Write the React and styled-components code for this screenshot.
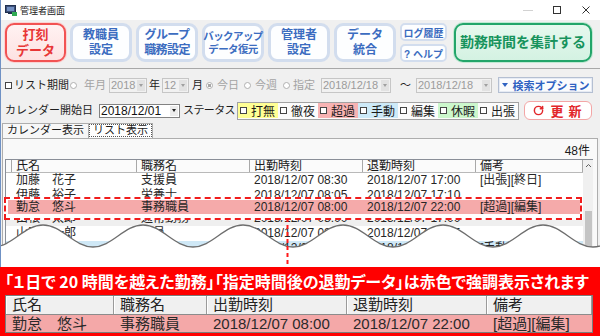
import React from "react";
import styled, { createGlobalStyle, css } from "styled-components";
import { RotateCw } from "lucide-react";

const FONT = `"Liberation Sans", "Noto Sans CJK JP", sans-serif`;

const Global = createGlobalStyle`
  html, body { margin: 0; padding: 0; background: #ffffff; }
  body { width: 600px; height: 336px; overflow: hidden; font-family: ${FONT}; color: #1a1a1a; }
  * { box-sizing: border-box; }
`;

const ml = css`
  margin-left: ${(p) => p.$ml || 0}px;
`;

const Page = styled.div`
  width: 600px;
  height: 336px;
  display: flex;
  flex-direction: column;
`;

const Window = styled.div`
  position: relative;
  height: 267px;
  flex: none;
  overflow: hidden;
  background: #f0f0f0;
  border-left: 1px solid #6f91c4;
  display: flex;
  flex-direction: column;
`;

const TitleBar = styled.div`
  height: 20px;
  flex: none;
  background: #fff;
  display: flex;
  align-items: center;
  padding-left: 4px;
`;

const TitleText = styled.span`
  font-size: 9px;
  margin-left: 3px;
  color: #222;
`;

const WinControls = styled.div`
  margin-left: auto;
  display: flex;
  height: 100%;
`;

const WinCtl = styled.div`
  width: 29px;
  display: flex;
  align-items: center;
  justify-content: center;
`;

const Toolbar = styled.div`
  height: 49px;
  flex: none;
  display: flex;
  align-items: flex-start;
  gap: 4px;
  padding: 3px 0 0 4px;
  border-bottom: 1px solid #a8a8a8;
`;

const variants = {
  red: css`
    border: 2px solid #f25353;
    background: linear-gradient(#fff2f2, #fde2e2);
    color: #e83636;
    font-size: 13px;
    box-shadow: 0 0 0 1px #fbd3d3;
  `,
  blue: css`
    border: 3px solid #d2ddee;
    background: #fdfeff;
    color: #3b6cc0;
    font-size: 12px;
  `,
  green: css`
    border: 2px solid #23a56a;
    background: linear-gradient(#e6f8ee, #d4f2e2);
    color: #17935c;
    font-size: 14px;
    box-shadow: 0 0 0 1px #bfe9d2;
  `,
};

const ToolBtn = styled.div`
  width: ${(p) => p.$w || 62}px;
  height: 39px;
  flex: none;
  ${ml};
  display: flex;
  align-items: center;
  justify-content: center;
  text-align: center;
  border-radius: 9px;
  font-weight: bold;
  line-height: 1.22;
  letter-spacing: ${(p) => (p.$tight ? "-0.6px" : "0")};
  white-space: nowrap;
  ${(p) => variants[p.$v]};
  font-size: ${(p) => (p.$fs ? p.$fs + "px" : undefined)};
`;

const SmallCol = styled.div`
  display: flex;
  flex-direction: column;
  gap: 3px;
  width: 47px;
`;

const SmallBtn = styled.div`
  height: 18px;
  border: 2px solid #d2ddee;
  background: #fdfeff;
  border-radius: 5px;
  color: #3b6cc0;
  font-size: 10px;
  font-weight: bold;
  display: flex;
  align-items: center;
  justify-content: center;
  white-space: nowrap;
`;

const Filters = styled.div`
  flex: none;
  padding-top: 8px;
`;

const FRow = styled.div`
  display: flex;
  align-items: center;
  height: ${(p) => p.$h}px;
  margin-top: ${(p) => p.$mt || 0}px;
`;

const Label = styled.span`
  ${ml};
  font-size: 11px;
  line-height: 1;
  white-space: nowrap;
  color: ${(p) => (p.$dim ? "#a3a3a3" : "#1e1e1e")};
  letter-spacing: ${(p) => p.$ls || 0}px;
`;

const CheckBox = styled.span`
  ${ml};
  width: 7px;
  height: 7px;
  flex: none;
  border: 1px solid #444;
  background: #fff;
`;

const Radio = styled.span`
  ${ml};
  width: 7px;
  height: 7px;
  flex: none;
  border-radius: 50%;
  border: 1px solid #b0b0b0;
  background: ${(p) =>
    p.$checked ? "radial-gradient(circle, #a8a8a8 0 1.6px, #fff 2px)" : "#fff"};
`;

const Combo = styled.div`
  ${ml};
  width: ${(p) => p.$w}px;
  height: ${(p) => p.$h || 15}px;
  flex: none;
  display: flex;
  border: 1px solid ${(p) => (p.$disabled ? "#c6c6c6" : "#828282")};
  background: ${(p) => (p.$disabled ? "#f1f1f1" : "#fff")};
  color: ${(p) => (p.$disabled ? "#9b9b9b" : "#111")};
  font-size: ${(p) => (p.$disabled ? 11 : 12)}px;
`;

const ComboText = styled.span`
  flex: 1;
  padding-left: 1px;
  display: flex;
  align-items: center;
  white-space: nowrap;
  overflow: hidden;
`;

const ComboArrow = styled.span`
  width: 8px;
  flex: none;
  margin: 1px;
  background: ${(p) => (p.$disabled ? "#e2e2e2" : "#ececec")};
  display: flex;
  align-items: center;
  justify-content: center;
  &::after {
    content: "";
    border-left: 2.5px solid transparent;
    border-right: 2.5px solid transparent;
    border-top: 3px solid ${(p) => (p.$disabled ? "#a0a0a0" : "#222")};
  }
`;

const SearchBtn = styled.div`
  ${ml};
  width: 95px;
  height: 16px;
  flex: none;
  border: 1px solid #b4bfd2;
  box-shadow: inset 0 0 0 1px #e6ebf4;
  background: #fafbfd;
  color: #2f62c2;
  font-size: 11px;
  font-weight: bold;
  display: flex;
  align-items: center;
  justify-content: center;
  gap: 5px;
  white-space: nowrap;
  &::before {
    content: "";
    border-left: 3px solid transparent;
    border-right: 3px solid transparent;
    border-top: 4px solid #2f62c2;
  }
`;

const StatusBox = styled.div`
  ${ml};
  display: flex;
  align-items: center;
  height: 18px;
  border: 1px solid #a2a2a2;
  background: #fbfbfb;
`;

const StatusItem = styled.div`
  width: 40px;
  height: 15px;
  display: flex;
  align-items: center;
  gap: 4px;
  padding-left: 2px;
  background: ${(p) => p.$bg || "transparent"};
  font-size: 12px;
  white-space: nowrap;
`;

const StatusBoxMark = styled.span`
  width: 7px;
  height: 7px;
  flex: none;
  border: 1px solid #444;
  background: #fff;
`;

const RefreshBtn = styled.div`
  ${ml};
  width: 68px;
  height: 19px;
  flex: none;
  border: 1.5px solid #f3a6a6;
  border-radius: 6px;
  background: #fff;
  color: #e2262a;
  font-size: 13px;
  font-weight: bold;
  display: flex;
  align-items: center;
  justify-content: center;
  gap: 6px;
  letter-spacing: 5px;
  padding-left: 4px;
`;

const Tabs = styled.div`
  display: flex;
  align-items: flex-end;
  height: 15px;
  margin-top: 3px;
  padding-left: 1px;
`;

const Tab = styled.div`
  height: 15px;
  margin-left: ${(p) => (p.$active ? -1 : 0)}px;
  padding: 0 4px;
  border: 1px solid #adadad;
  border-bottom: none;
  background: ${(p) => (p.$active ? "#ffffff" : "#f7f7f7")};
  font-size: 11px;
  line-height: 13px;
  white-space: nowrap;
  outline: ${(p) => (p.$active ? "1px dotted #555" : "none")};
  outline-offset: -2px;
`;

const Panel = styled.div`
  flex: 1;
  min-height: 0;
  margin: 0 2px 0 1px;
  border: 1px solid #adadad;
  border-bottom: none;
  background: #f9f9f9;
  display: flex;
  flex-direction: column;
`;

const Count = styled.div`
  height: 13px;
  margin-top: 6px;
  padding-right: 7px;
  text-align: right;
  font-size: 12px;
  line-height: 13px;
  flex: none;
`;

const ListArea = styled.div`
  margin: 1px 0 0 2px;
  width: 588px;
  flex: 1;
  display: flex;
  border-top: 1px solid #8a8f98;
  border-left: 1px solid #8a8f98;
  background: #fff;
`;

const GridWrap = styled.div`
  flex: 1;
  display: flex;
  flex-direction: column;
`;

const COLS = "6px 125px 113px 113px 113px 107px";

const HeaderRow = styled.div`
  display: grid;
  grid-template-columns: ${COLS};
  height: 13px;
  background: #fbfbfb;
  border-bottom: 1px solid #b9b9b9;
  flex: none;
`;

const HeaderCell = styled.div`
  border-right: 1px solid #a8a8a8;
  padding-left: 4px;
  font-size: 12px;
  line-height: 12px;
  white-space: nowrap;
  overflow: hidden;
`;

const RowClip = styled.div`
  height: ${(p) => p.$h}px;
  flex: none;
  overflow: hidden;
  display: flex;
  flex-direction: column;
  justify-content: ${(p) => (p.$from === "bottom" ? "flex-end" : "flex-start")};
`;

const Row = styled.div`
  display: grid;
  grid-template-columns: ${(p) => p.$cols || COLS};
  height: ${(p) => p.$h || 15}px;
  line-height: ${(p) => p.$h || 15}px;
  flex: none;
  background: ${(p) => p.$bg || "#fff"};
  font-size: 12px;
  color: #262626;
`;

const Cell = styled.div`
  padding-left: 4px;
  white-space: nowrap;
  overflow: hidden;
`;

const Highlight = styled.div`
  margin-left: -2px;
  width: 578px;
  height: 23px;
  flex: none;
  border: 2px dashed #f01c1c;
  padding: 1px 0 4px 2px;
  background: #fff;
`;

const Scrollbar = styled.div`
  width: 10px;
  flex: none;
  background: #f0f0f0;
  display: flex;
  flex-direction: column;
  align-items: center;
`;

const ScrollUp = styled.div`
  height: 11px;
  display: flex;
  align-items: center;
  justify-content: center;
`;

const ScrollThumb = styled.div`
  width: 7px;
  margin-top: 40px;
  flex: 1;
  background: #c4c4c4;
`;

const WaveSvg = styled.svg`
  position: absolute;
  left: -1px;
  top: 218px;
  width: 601px;
  height: 49px;
`;

const Banner = styled.div`
  flex: 1;
  background: #ff0000;
  display: flex;
  flex-direction: column;
  padding: 3px 0 0 5px;
`;

const BannerText = styled.div`
  height: 22px;
  color: #fff;
  font-family: "Noto Sans CJK JP", sans-serif;
  font-weight: bold;
  font-size: 16px;
  line-height: 22px;
  white-space: nowrap;
  font-feature-settings: "palt";
  letter-spacing: 0px;
`;

const Inset = styled.div`
  margin-top: 3px;
  width: 588px;
  border: 1px solid #7c7c7c;
  background: #fff;
`;

const ICOLS = "108px 93px 140px 140px 105px";

const InsetHead = styled.div`
  display: grid;
  grid-template-columns: ${ICOLS};
  height: 19px;
  background: #f0f0f0;
  border-bottom: 1px solid #8c8c8c;
`;

const InsetHeadCell = styled.div`
  border-right: 1px solid #9a9a9a;
  box-shadow: inset 1px 1px 0 #ffffff;
  padding-left: 6px;
  font-size: 15px;
  line-height: 18px;
  color: #222;
  white-space: nowrap;
`;

const InsetRow = styled.div`
  display: grid;
  grid-template-columns: ${ICOLS};
  height: 17px;
  background: #f4a8a8;
  font-size: 15px;
  line-height: 17px;
  color: #2a2a2a;
`;

const InsetCell = styled.div`
  padding-left: 6px;
  white-space: nowrap;
  overflow: hidden;
`;

const rows = [
  { name: "加藤　花子", job: "支援員", cin: "2018/12/07 08:30", cout: "2018/12/07 17:00", note: "[出張][終日]" },
  { name: "伊藤　裕子", job: "栄養士", cin: "2018/12/07 08:05", cout: "2018/12/07 17:10", note: "" },
];
const rowsAfter = [
  { name: "山根　太郎", job: "通常勤務", cin: "2018/12/07 08:00", cout: "2018/12/07 17:00", note: "", bg: "#efefef" },
  { name: "山田　一郎", job: "教員", cin: "2018/12/07 08:10", cout: "2018/12/07 17:45", note: "" },
  { name: "加藤　健太", job: "教員", cin: "2018/12/07 08:20", cout: "2018/12/07 17:30", note: "[手動]", bg: "#cfe8f6" },
];
const hi = { name: "勤怠　悠斗", job: "事務職員", cin: "2018/12/07 08:00", cout: "2018/12/07 22:00", note: "[超過][編集]" };

const DataCells = ({ r }) => (
  <>
    <Cell />
    <Cell>{r.name}</Cell>
    <Cell>{r.job}</Cell>
    <Cell>{r.cin}</Cell>
    <Cell>{r.cout}</Cell>
    <Cell>{r.note}</Cell>
  </>
);

const wavePath = (() => {
  const h = 50;
  const top = 7;
  const bot = 29;
  let x = -8;
  let d = `M ${x} ${bot}`;
  let up = true;
  while (x < 620) {
    const nx = x + h;
    const y0 = up ? bot : top;
    const y1 = up ? top : bot;
    d += ` C ${x + h * 0.38} ${y0} ${nx - h * 0.38} ${y1} ${nx} ${y1}`;
    x = nx;
    up = !up;
  }
  return { d, end: x };
})();

const statuses = [
  { t: "打無", bg: "#ffff94" },
  { t: "徹夜" },
  { t: "超過", bg: "#f7b3b3" },
  { t: "手動", bg: "#cdeaf8" },
  { t: "編集" },
  { t: "休暇", bg: "#ccf7cc" },
  { t: "出張" },
];

export default function App() {
  return (
    <Page>
      <Global />
      <Window>
        <TitleBar>
          <svg width="12" height="11" viewBox="0 0 12 11">
            <rect x="0.5" y="0.5" width="10" height="7" fill="#3d5079" stroke="#20304f" />
            <rect x="2" y="2" width="7" height="4" fill="#7390c2" />
            <rect x="3" y="8" width="5" height="1" fill="#20304f" />
            <rect x="7" y="7" width="5" height="4" fill="#2faa52" />
          </svg>
          <TitleText>管理者画面</TitleText>
          <WinControls>
            <WinCtl>
              <svg width="10" height="10" viewBox="0 0 10 10">
                <line x1="0" y1="5.5" x2="10" y2="5.5" stroke="#d2d2d2" strokeWidth="1" />
              </svg>
            </WinCtl>
            <WinCtl>
              <svg width="10" height="10" viewBox="0 0 10 10">
                <rect x="1.5" y="1.5" width="7" height="7" fill="none" stroke="#333" strokeWidth="1" />
              </svg>
            </WinCtl>
            <WinCtl>
              <svg width="10" height="10" viewBox="0 0 10 10">
                <path d="M1.5 1.5 L8.5 8.5 M8.5 1.5 L1.5 8.5" stroke="#333" strokeWidth="1" />
              </svg>
            </WinCtl>
          </WinControls>
        </TitleBar>

        <Toolbar>
          <ToolBtn $v="red" $w={61}>
            打刻
            <br />
            データ
          </ToolBtn>
          <ToolBtn $v="blue">
            教職員
            <br />
            設定
          </ToolBtn>
          <ToolBtn $v="blue" $tight>
            グループ
            <br />
            職務設定
          </ToolBtn>
          <ToolBtn $v="blue" $fs={10.5} $tight>
            バックアップ
            <br />
            データ復元
          </ToolBtn>
          <ToolBtn $v="blue">
            管理者
            <br />
            設定
          </ToolBtn>
          <ToolBtn $v="blue">
            データ
            <br />
            統合
          </ToolBtn>
          <SmallCol>
            <SmallBtn>ログ履歴</SmallBtn>
            <SmallBtn>? ヘルプ</SmallBtn>
          </SmallCol>
          <ToolBtn $v="green" $w={138} $ml={3}>
            勤務時間を集計する
          </ToolBtn>
        </Toolbar>

        <Filters>
          <FRow $h={16}>
            <CheckBox $ml={4} />
            <Label $ml={2}>リスト期間</Label>
            <Radio $ml={1} />
            <Label $ml={7} $dim>
              年月
            </Label>
            <Combo $w={38} $ml={3} $disabled>
              <ComboText>2018</ComboText>
              <ComboArrow $disabled />
            </Combo>
            <Label $ml={2}>年</Label>
            <Combo $w={27} $ml={2} $disabled>
              <ComboText>12</ComboText>
              <ComboArrow $disabled />
            </Combo>
            <Label $ml={3}>月</Label>
            <Radio $ml={3} $checked />
            <Label $ml={4} $dim>
              今日
            </Label>
            <Radio $ml={5} />
            <Label $ml={4} $dim>
              今週
            </Label>
            <Radio $ml={6} />
            <Label $ml={3} $dim>
              指定
            </Label>
            <Combo $w={70} $ml={6} $disabled>
              <ComboText>2018/12/18</ComboText>
              <ComboArrow $disabled />
            </Combo>
            <Label $ml={9}>〜</Label>
            <Combo $w={76} $ml={5} $disabled>
              <ComboText>2018/12/18</ComboText>
              <ComboArrow $disabled />
            </Combo>
            <SearchBtn $ml={6}>検索オプション</SearchBtn>
          </FRow>

          <FRow $h={19} $mt={8}>
            <Label $ml={4}>カレンダー開始日</Label>
            <Combo $w={81} $h={14} $ml={6}>
              <ComboText>2018/12/01</ComboText>
              <ComboArrow />
            </Combo>
            <Label $ml={3} $ls={-0.6}>
              ステータス
            </Label>
            <StatusBox $ml={2}>
              {statuses.map((s) => (
                <StatusItem key={s.t} $bg={s.bg}>
                  <StatusBoxMark />
                  {s.t}
                </StatusItem>
              ))}
            </StatusBox>
            <RefreshBtn $ml={5}>
              <RotateCw size={11} strokeWidth={3.2} color="#e2262a" />
              更新
            </RefreshBtn>
          </FRow>

          <Tabs>
            <Tab>カレンダー表示</Tab>
            <Tab $active>リスト表示</Tab>
          </Tabs>
        </Filters>

        <Panel>
          <Count>48件</Count>
          <ListArea>
            <GridWrap>
              <HeaderRow>
                <HeaderCell />
                <HeaderCell>氏名</HeaderCell>
                <HeaderCell>職務名</HeaderCell>
                <HeaderCell>出勤時刻</HeaderCell>
                <HeaderCell>退勤時刻</HeaderCell>
                <HeaderCell>備考</HeaderCell>
              </HeaderRow>
              <Row>
                <DataCells r={rows[0]} />
              </Row>
              <RowClip $h={9}>
                <Row>
                  <DataCells r={rows[1]} />
                </Row>
              </RowClip>
              <Highlight>
                <Row $h={14} $bg="#f5aaaa" $cols="4px 125px 113px 113px 113px 102px">
                  <DataCells r={hi} />
                </Row>
              </Highlight>
              <RowClip $h={6} $from="bottom">
                <Row $bg={rowsAfter[0].bg}>
                  <DataCells r={rowsAfter[0]} />
                </Row>
              </RowClip>
              <Row>
                <DataCells r={rowsAfter[1]} />
              </Row>
              <Row $bg={rowsAfter[2].bg}>
                <DataCells r={rowsAfter[2]} />
              </Row>
            </GridWrap>
            <Scrollbar>
              <ScrollUp>
                <svg width="7" height="5" viewBox="0 0 7 5">
                  <path d="M1 4 L3.5 1.5 L6 4" fill="none" stroke="#606060" strokeWidth="1" />
                </svg>
              </ScrollUp>
              <ScrollThumb />
            </Scrollbar>
          </ListArea>
        </Panel>

        <WaveSvg viewBox="-1 0 601 49">
          <path d={`${wavePath.d} L ${wavePath.end} 49 L -10 49 Z`} fill="#ffffff" />
          <path d={wavePath.d} fill="none" stroke="#6e6e6e" strokeWidth="1.3" />
          <line x1="286.5" y1="0" x2="286.5" y2="49" stroke="#ff1a1a" strokeWidth="2" strokeDasharray="4 3" />
        </WaveSvg>
      </Window>

      <Banner>
        <BannerText>「１日で 20 時間を越えた勤務」「指定時間後の退勤データ」は赤色で強調表示されます</BannerText>
        <Inset>
          <InsetHead>
            <InsetHeadCell>氏名</InsetHeadCell>
            <InsetHeadCell>職務名</InsetHeadCell>
            <InsetHeadCell>出勤時刻</InsetHeadCell>
            <InsetHeadCell>退勤時刻</InsetHeadCell>
            <InsetHeadCell>備考</InsetHeadCell>
          </InsetHead>
          <InsetRow>
            <InsetCell>勤怠　悠斗</InsetCell>
            <InsetCell>事務職員</InsetCell>
            <InsetCell>2018/12/07 08:00</InsetCell>
            <InsetCell>2018/12/07 22:00</InsetCell>
            <InsetCell>[超過][編集]</InsetCell>
          </InsetRow>
        </Inset>
      </Banner>
    </Page>
  );
}
